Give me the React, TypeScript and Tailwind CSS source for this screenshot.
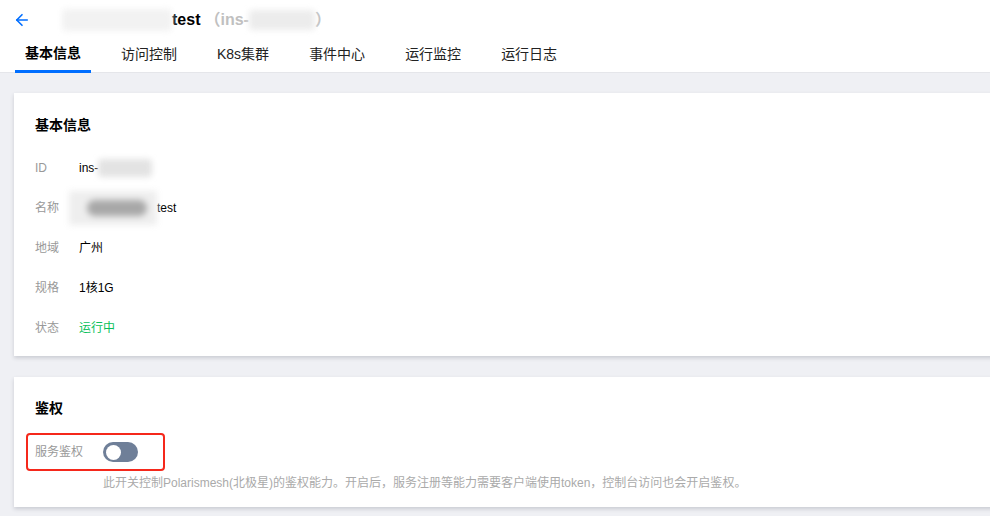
import { ArrowLeft } from "lucide-react";

const tabs = ["基本信息", "访问控制", "K8s集群", "事件中心", "运行监控", "运行日志"];

const font = { fontFamily: '"Liberation Sans", "Noto Sans CJK SC", sans-serif' };

function Blur({ className }: { className: string }) {
  return <span className={"inline-block rounded-sm blur-[3px] " + className} />;
}

function InfoRow({ label, children }: { label: string; children: React.ReactNode }) {
  return (
    <div className="flex h-[40px] items-center">
      <span className="w-[44px] text-[12px] text-[#999]">{label}</span>
      <div className="flex items-center text-[12px] text-[#000]">{children}</div>
    </div>
  );
}

export default function App() {
  return (
    <div className="h-[516px] w-[990px] overflow-hidden bg-[#eff0f4]" style={font}>
      <header className="h-[73px] border-b border-[#e5e6ea] bg-white">
        <div className="flex h-[40px] items-center pl-[13px]">
          <ArrowLeft className="h-[18px] w-[18px] text-[#006eff]" strokeWidth={2.2} />
          <div className="ml-[31px] flex items-center">
            <Blur className="h-[22px] w-[110px] bg-[#f2f2f2]" />
            <span className="text-[16px] font-bold text-black">test</span>
            <span className="ml-[4px] text-[16px] font-bold text-[#c0c0c0]">（ins-</span>
            <Blur className="h-[20px] w-[66px] bg-[#ececec]" />
            <span className="text-[16px] font-bold text-[#c0c0c0]">）</span>
          </div>
        </div>
        <nav className="flex h-[33px] gap-[20px] pl-[15px]">
          {tabs.map((t, i) => (
            <div
              key={t}
              className={
                "flex h-full items-center px-[10px] pb-[4px] text-[14px] " +
                (i === 0
                  ? "border-b-[3px] border-[#006eff] pb-[1px] font-bold text-black"
                  : "text-[#222]")
              }
            >
              {t}
            </div>
          ))}
        </nav>
      </header>

      <section className="-mr-[20px] ml-[14px] mt-[20px] h-[263px] bg-white px-[21px] pt-[22px] shadow-[0_2px_4px_rgba(54,58,80,0.2)]">
        <h2 className="mb-[12px] text-[14px] font-bold text-black">基本信息</h2>
        <InfoRow label="ID">
          <span>ins-</span>
          <Blur className="h-[18px] w-[54px] bg-[#e3e3e3]" />
        </InfoRow>
        <InfoRow label="名称">
          <span className="relative -ml-[10px] inline-block h-[34px] w-[88px] bg-[#eeeeee] blur-[3px]">
            <span className="absolute left-[18px] top-[9px] h-[16px] w-[60px] rounded-full bg-[#a8a8a8]" />
          </span>
          <span>test</span>
        </InfoRow>
        <InfoRow label="地域">广州</InfoRow>
        <InfoRow label="规格">1核1G</InfoRow>
        <InfoRow label="状态">
          <span className="text-[#0abf5b]">运行中</span>
        </InfoRow>
      </section>

      <section className="-mr-[20px] ml-[14px] mt-[21px] h-[130px] bg-white px-[21px] pt-[21px] shadow-[0_2px_4px_rgba(54,58,80,0.2)]">
        <h2 className="text-[14px] font-bold text-black">鉴权</h2>
        <div className="-ml-[9px] mt-[14px] flex h-[38px] w-[139px] items-center rounded-[4px] border-2 border-[#f5281b] pl-[7px]">
          <span className="w-[68px] text-[12px] text-[#999]">服务鉴权</span>
          <span className="flex h-[20px] w-[35px] items-center rounded-full bg-[#6f7f98] px-[3px]">
            <span className="h-[15px] w-[15px] rounded-full bg-white" />
          </span>
        </div>
        <p className="ml-[68px] mt-[3px] text-[12px] text-[#aaa]">
          此开关控制Polarismesh(北极星)的鉴权能力。开启后，服务注册等能力需要客户端使用token，控制台访问也会开启鉴权。
        </p>
      </section>
    </div>
  );
}
